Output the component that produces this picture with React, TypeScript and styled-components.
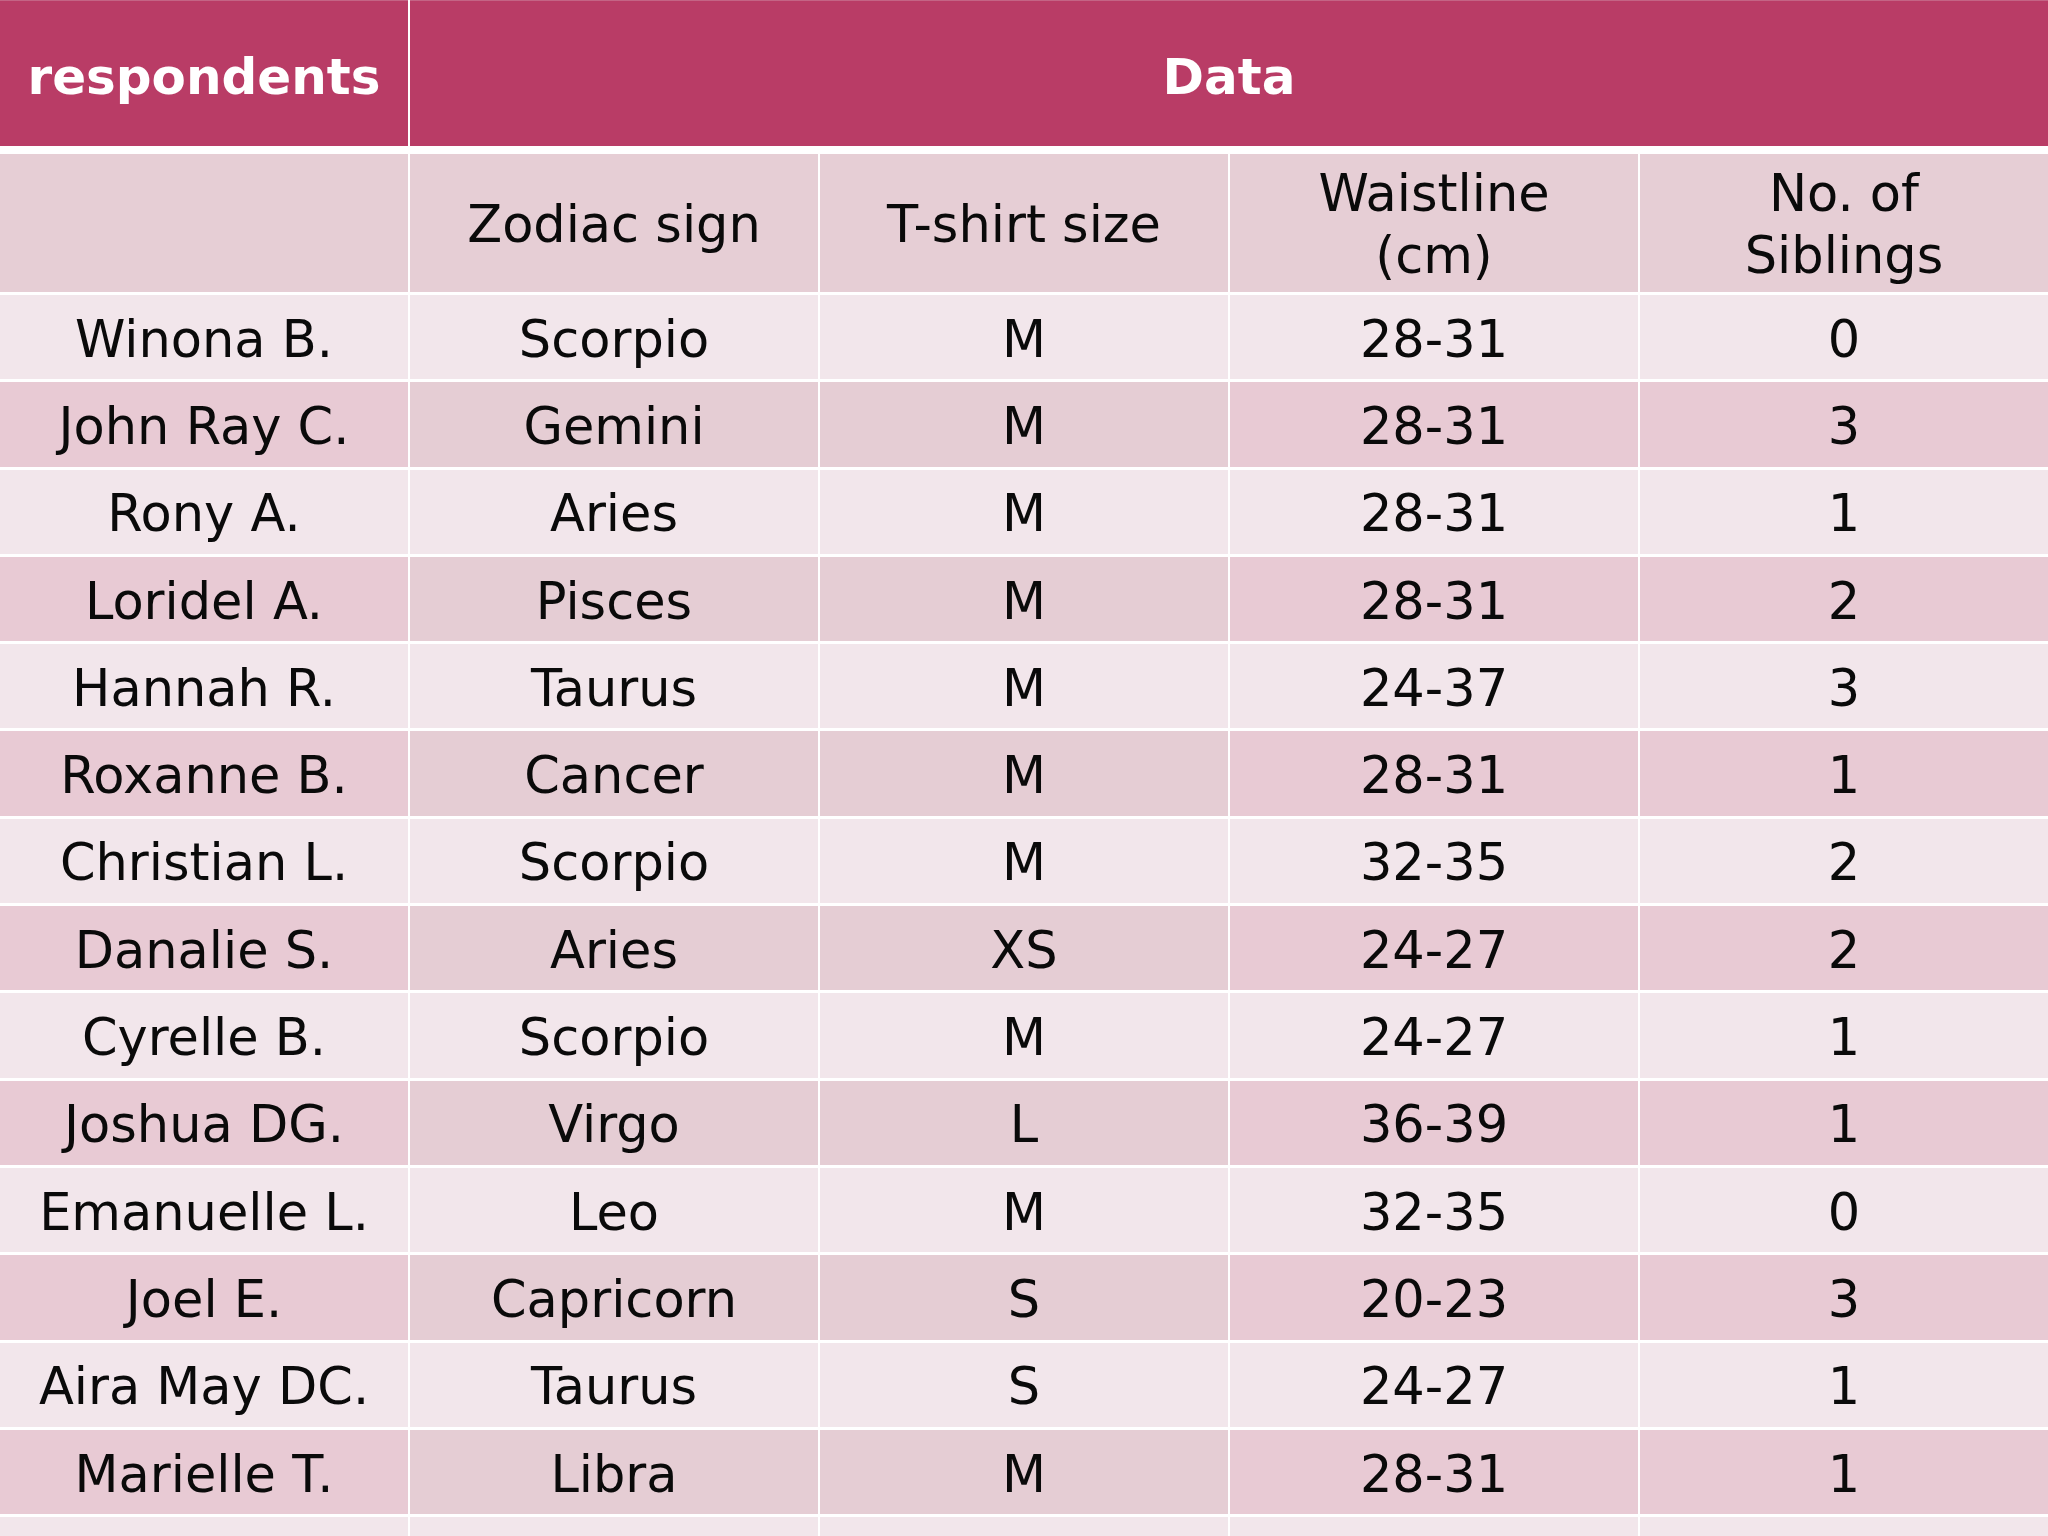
import React from "react";
import styled, { createGlobalStyle } from "styled-components";

const Global = createGlobalStyle`
  html, body {
    margin: 0;
    padding: 0;
    overflow: hidden;
    background: #ffffff;
  }
  body {
    font-family: "DejaVu Sans", Verdana, sans-serif;
  }
`;

const Page = styled.div`
  width: 2048px;
  height: 1536px;
  overflow: hidden;
  background: #ffffff;
`;

const HeaderGrid = styled.div`
  display: grid;
  grid-template-columns: repeat(5, 1fr);
  column-gap: 2px;
  height: 146px;
  margin-bottom: 8px;
`;

const BodyGrid = styled.div`
  display: grid;
  grid-template-columns: repeat(5, 1fr);
  column-gap: 2px;
  row-gap: 3px;
  grid-template-rows: 138px;
  grid-auto-rows: 84.3px;
`;

const HeadCell = styled.div<{ $span?: number }>`
  grid-column: span ${(p) => p.$span ?? 1};
  background: #b93c66;
  border-top: 1px solid #c46485;
  color: #ffffff;
  font-family: "DejaVu Sans", Verdana, sans-serif;
  font-weight: 700;
  font-size: 50px;
  display: flex;
  align-items: center;
  justify-content: center;
  padding-top: 6px;
  box-sizing: border-box;
`;

const SubCell = styled.div`
  background: #e6ced5;
  color: #0a0a0a;
  font-size: 51px;
  line-height: 62px;
  text-align: center;
  display: flex;
  align-items: center;
  justify-content: center;
  padding-top: 4px;
  box-sizing: border-box;
`;

const Cell = styled.div<{ $dark: boolean; $pink?: boolean }>`
  background: ${(p) => (p.$dark ? (p.$pink ? "#e8cad4" : "#e5cdd4") : "#f2e6eb")};
  color: #0a0a0a;
  font-size: 51px;
  display: flex;
  align-items: center;
  justify-content: center;
  padding-top: 4px;
  box-sizing: border-box;
  white-space: nowrap;
`;

const rows: [string, string, string, string, string][] = [
  ["Winona B.", "Scorpio", "M", "28-31", "0"],
  ["John Ray C.", "Gemini", "M", "28-31", "3"],
  ["Rony A.", "Aries", "M", "28-31", "1"],
  ["Loridel A.", "Pisces", "M", "28-31", "2"],
  ["Hannah R.", "Taurus", "M", "24-37", "3"],
  ["Roxanne B.", "Cancer", "M", "28-31", "1"],
  ["Christian L.", "Scorpio", "M", "32-35", "2"],
  ["Danalie S.", "Aries", "XS", "24-27", "2"],
  ["Cyrelle B.", "Scorpio", "M", "24-27", "1"],
  ["Joshua DG.", "Virgo", "L", "36-39", "1"],
  ["Emanuelle L.", "Leo", "M", "32-35", "0"],
  ["Joel E.", "Capricorn", "S", "20-23", "3"],
  ["Aira May DC.", "Taurus", "S", "24-27", "1"],
  ["Marielle T.", "Libra", "M", "28-31", "1"],
  ["", "", "", "", ""],
];

export default function App() {
  return (
    <Page>
      <Global />
      <HeaderGrid>
        <HeadCell>respondents</HeadCell>
        <HeadCell $span={4}>Data</HeadCell>
      </HeaderGrid>
      <BodyGrid>
        <SubCell />
        <SubCell>Zodiac sign</SubCell>
        <SubCell>T-shirt size</SubCell>
        <SubCell>
          Waistline
          <br />
          (cm)
        </SubCell>
        <SubCell>
          No. of
          <br />
          Siblings
        </SubCell>
        {rows.map((r, i) =>
          r.map((v, j) => (
            <Cell key={`${i}-${j}`} $dark={i % 2 === 1} $pink={j === 0 || j === 3 || j === 4}>
              {v}
            </Cell>
          ))
        )}
      </BodyGrid>
    </Page>
  );
}
